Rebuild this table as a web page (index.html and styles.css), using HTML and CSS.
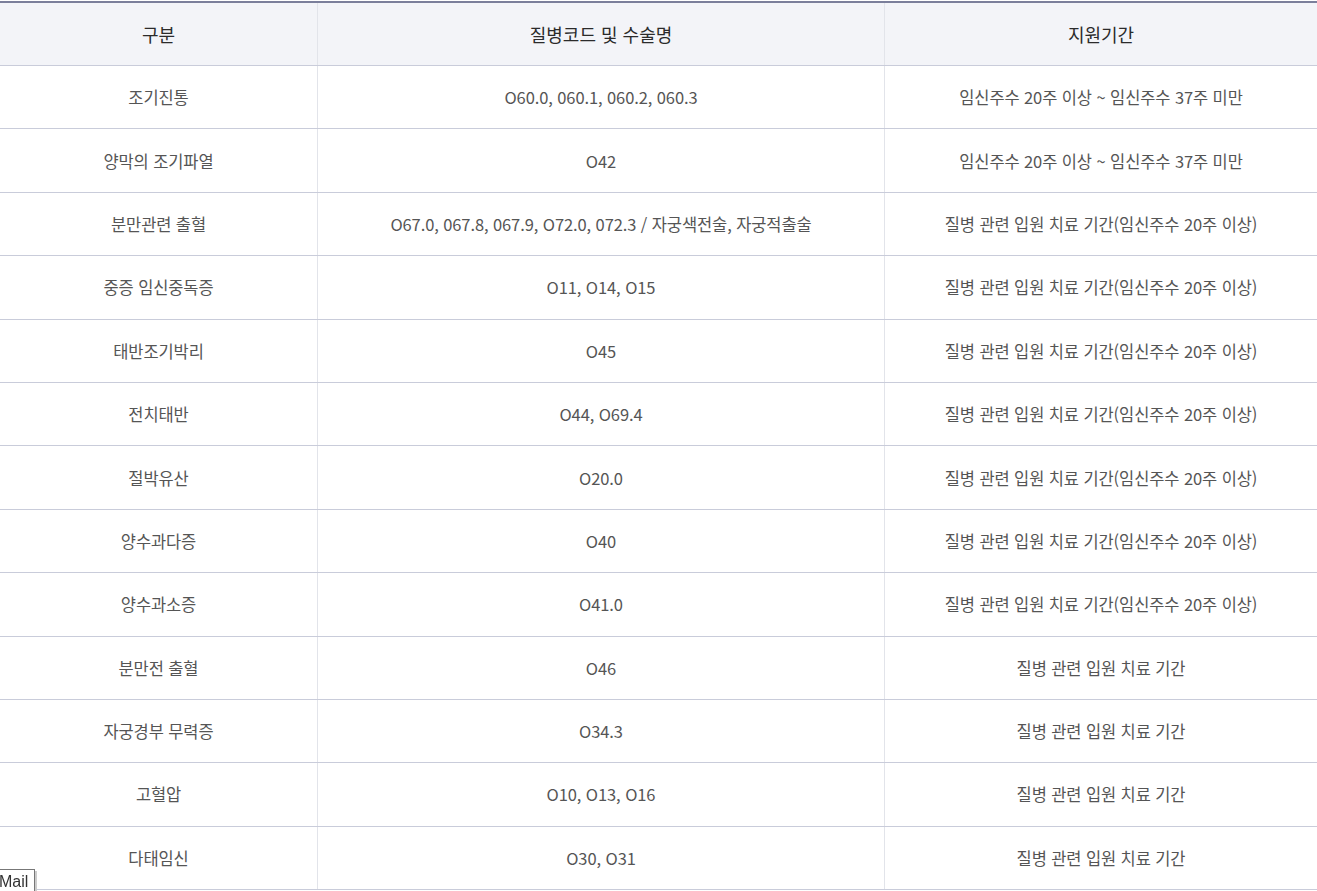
FILE: index.html
```html
<!DOCTYPE html>
<html lang="ko">
<head>
<meta charset="utf-8">
<link rel="stylesheet" href="styles.css">
</head>
<body>
<table class="tbl">
  <thead>
    <tr><th class="c1">구분</th><th class="c2">질병코드 및 수술명</th><th class="c3">지원기간</th></tr>
  </thead>
  <tbody>
    <tr><td>조기진통</td><td>O60.0, 060.1, 060.2, 060.3</td><td>임신주수 20주 이상 ~ 임신주수 37주 미만</td></tr>
    <tr><td>양막의 조기파열</td><td>O42</td><td>임신주수 20주 이상 ~ 임신주수 37주 미만</td></tr>
    <tr><td>분만관련 출혈</td><td>O67.0, 067.8, 067.9, O72.0, 072.3 / 자궁색전술, 자궁적출술</td><td>질병 관련 입원 치료 기간(임신주수 20주 이상)</td></tr>
    <tr><td>중증 임신중독증</td><td>O11, O14, O15</td><td>질병 관련 입원 치료 기간(임신주수 20주 이상)</td></tr>
    <tr><td>태반조기박리</td><td>O45</td><td>질병 관련 입원 치료 기간(임신주수 20주 이상)</td></tr>
    <tr><td>전치태반</td><td>O44, O69.4</td><td>질병 관련 입원 치료 기간(임신주수 20주 이상)</td></tr>
    <tr><td>절박유산</td><td>O20.0</td><td>질병 관련 입원 치료 기간(임신주수 20주 이상)</td></tr>
    <tr><td>양수과다증</td><td>O40</td><td>질병 관련 입원 치료 기간(임신주수 20주 이상)</td></tr>
    <tr><td>양수과소증</td><td>O41.0</td><td>질병 관련 입원 치료 기간(임신주수 20주 이상)</td></tr>
    <tr><td>분만전 출혈</td><td>O46</td><td>질병 관련 입원 치료 기간</td></tr>
    <tr><td>자궁경부 무력증</td><td>O34.3</td><td>질병 관련 입원 치료 기간</td></tr>
    <tr><td>고혈압</td><td>O10, O13, O16</td><td>질병 관련 입원 치료 기간</td></tr>
    <tr><td>다태임신</td><td>O30, O31</td><td>질병 관련 입원 치료 기간</td></tr>
  </tbody>
</table>
<div class="mail">Mail</div>
</body>
</html>
```
FILE: styles.css
```css
html, body {
  margin: 0;
  padding: 0;
  background: #fff;
}
body {
  font-family: "Noto Sans CJK KR", "Noto Sans", sans-serif;
  padding-top: 1px;
}
.tbl {
  width: 1317px;
  border-collapse: collapse;
  table-layout: fixed;
  border-top: 2px solid #7b7f9b;
}
.tbl th, .tbl td {
  text-align: center;
  vertical-align: middle;
  padding: 0;
  font-size: 16.5px;
  letter-spacing: -0.1px;
  border-left: 1px solid #e2e4ea;
  border-bottom: 1px solid #c9ccda;
}
.tbl th:first-child, .tbl td:first-child {
  border-left: none;
}
.tbl th {
  height: 62px;
  background: #f3f4f8;
  color: #2b2b2b;
  font-weight: 400;
  font-size: 18px;
  letter-spacing: 0;
}
.tbl td {
  height: 62.4px;
  color: #555;
}
.c1 { width: 317px; }
.c2 { width: 566px; }
.c3 { width: auto; }
.mail {
  position: fixed;
  left: -8px;
  top: 869px;
  height: 24px;
  padding: 0 6px;
  background: #fff;
  border: 1px solid #777;
  box-shadow: 2px 2px 0 #ccc;
  font-family: "Liberation Sans", sans-serif;
  font-size: 16px;
  line-height: 24px;
  color: #333;
}
```
